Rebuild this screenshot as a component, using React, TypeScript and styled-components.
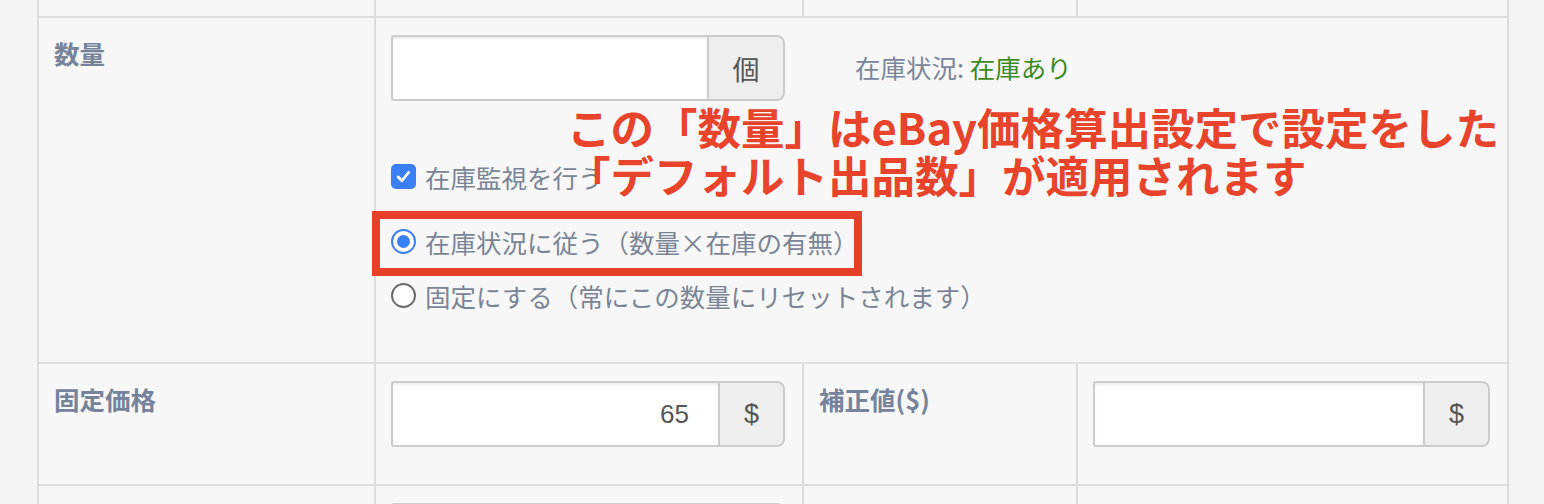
import React from 'react';
import styled, { createGlobalStyle } from 'styled-components';

const Global = createGlobalStyle`
  html, body { margin: 0; padding: 0; background: #f4f4f4; }
  body { font-family: "Noto Sans CJK JP", "Noto Sans", sans-serif; }
  * { box-sizing: border-box; }
`;

const Page = styled.div`
  width: 1544px;
  height: 504px;
  overflow: hidden;
  padding-left: 37px;
`;

const Grid = styled.div`
  display: grid;
  grid-template-columns: 335px 426px 272px 429px;
  grid-template-rows: 16px 344px 120px 120px;
  gap: 2px;
  padding: 0 2px;
  width: max-content;
  background: #dddddd;
`;

const Cell = styled.div<{ $span?: number; $flat?: boolean }>`
  position: relative;
  background: #f7f7f7;
  padding: ${(p) => (p.$flat ? '0' : '17px 17px 0 15px')};
  grid-column: ${(p) => (p.$span ? `span ${p.$span}` : 'auto')};
`;

const Label = styled.div`
  font-size: 25.5px;
  line-height: 36px;
  font-weight: 700;
  color: #76839a;
`;

const TopLine = styled.div`
  display: flex;
  align-items: center;
`;

const InputGroup = styled.div<{ $w: number }>`
  display: flex;
  width: ${(p) => p.$w}px;
  height: 66px;
`;

const Field = styled.input`
  flex: 1;
  min-width: 0;
  height: 100%;
  background: #fff;
  border: 2px solid #cccccc;
  border-right: none;
  border-radius: 3px 0 0 3px;
  box-shadow: inset 0 2px 2px rgba(0, 0, 0, 0.075);
  padding: 0 29px;
  text-align: right;
  font-family: "Liberation Sans", Arial, sans-serif;
  font-size: 26px;
  color: #555555;
  outline: none;
`;

const Addon = styled.div<{ $w: number }>`
  width: ${(p) => p.$w}px;
  height: 100%;
  background: #eeeeee;
  border: 2px solid #cccccc;
  border-radius: 0 8px 8px 0;
  display: flex;
  align-items: center;
  justify-content: center;
  font-family: "Liberation Sans", "Noto Sans CJK JP", sans-serif;
  font-size: 27px;
  color: #555555;
`;

const Status = styled.div`
  margin-left: 70px;
  margin-bottom: 4px;
  font-size: 25.5px;
  color: #7a869a;
  span {
    color: #3b8a22;
  }
`;

const Option = styled.label<{ $mt: number }>`
  position: relative;
  display: flex;
  align-items: center;
  gap: 9px;
  height: 36px;
  margin-top: ${(p) => p.$mt}px;
  font-size: 25.5px;
  color: #7a8596;
  width: max-content;
`;

const CheckBox = styled.span`
  width: 25px;
  height: 25px;
  border-radius: 5px;
  background: #3b7ff6;
  display: flex;
  align-items: center;
  justify-content: center;
`;

const Radio = styled.span<{ $on?: boolean }>`
  width: 25px;
  height: 25px;
  border-radius: 50%;
  background: #fff;
  border: ${(p) => (p.$on ? '2.5px solid #3b7ff6' : '2px solid #6b6b6b')};
  display: flex;
  align-items: center;
  justify-content: center;
  &::after {
    content: '';
    display: ${(p) => (p.$on ? 'block' : 'none')};
    width: 13px;
    height: 13px;
    border-radius: 50%;
    background: #3b7ff6;
  }
`;

const Frame = styled.div`
  position: absolute;
  left: -19px;
  top: -12px;
  width: 490px;
  height: 65px;
  border: 8px solid #e8412a;
  pointer-events: none;
`;

const Note = styled.div`
  position: absolute;
  left: 191px;
  top: 85px;
  font-size: 43.5px;
  line-height: 48px;
  font-weight: 700;
  color: #e8432b;
  white-space: nowrap;
`;

export default function App() {
  return (
    <>
      <Global />
      <Page>
        <Grid>
          <Cell $flat />
          <Cell $flat />
          <Cell $flat />
          <Cell $flat />

          <Cell>
            <Label>数量</Label>
          </Cell>
          <Cell $span={3}>
            <TopLine>
              <InputGroup $w={394}>
                <Field defaultValue="" />
                <Addon $w={78}>個</Addon>
              </InputGroup>
              <Status>
                在庫状況: <span>在庫あり</span>
              </Status>
            </TopLine>
            <Option $mt={57}>
              <CheckBox>
                <svg width="17" height="17" viewBox="0 0 16 16">
                  <path d="M3 8.5 L6.5 12 L13 4" fill="none" stroke="#fff" strokeWidth="2.6" strokeLinecap="round" strokeLinejoin="round" />
                </svg>
              </CheckBox>
              在庫監視を行う
            </Option>
            <Option $mt={29}>
              <Radio $on />
              在庫状況に従う（数量×在庫の有無）
              <Frame />
            </Option>
            <Option $mt={18}>
              <Radio />
              固定にする（常にこの数量にリセットされます）
            </Option>
            <Note>
              この「数量」はeBay価格算出設定で設定をした
              <br />
              「デフォルト出品数」が適用されます
            </Note>
          </Cell>

          <Cell>
            <Label>固定価格</Label>
          </Cell>
          <Cell>
            <InputGroup $w={394}>
              <Field defaultValue="65" />
              <Addon $w={67}>$</Addon>
            </InputGroup>
          </Cell>
          <Cell>
            <Label>補正値($)</Label>
          </Cell>
          <Cell>
            <InputGroup $w={397}>
              <Field defaultValue="" />
              <Addon $w={67}>$</Addon>
            </InputGroup>
          </Cell>

          <Cell />
          <Cell>
            <InputGroup $w={394}>
              <Field defaultValue="" />
              <Addon $w={67} />
            </InputGroup>
          </Cell>
          <Cell />
          <Cell />
        </Grid>
      </Page>
    </>
  );
}
